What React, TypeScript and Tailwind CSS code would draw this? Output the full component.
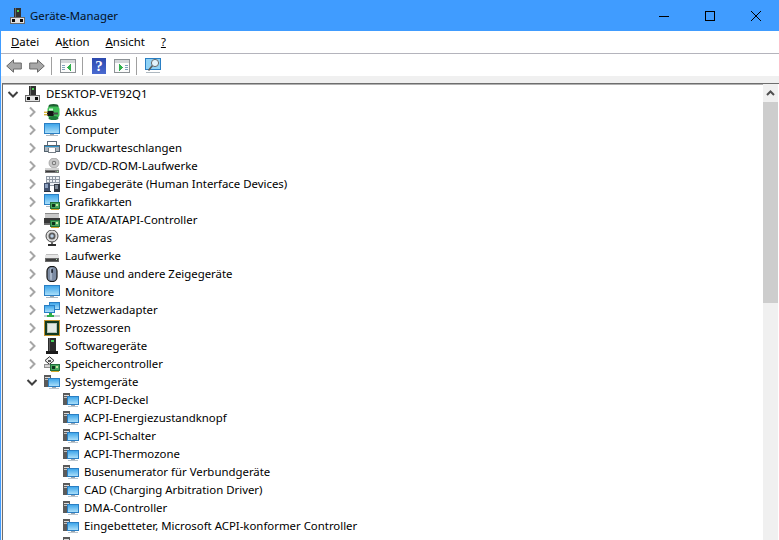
import React from 'react';

type IconProps = { className?: string };

const Svg = ({ children, className }: { children: React.ReactNode; className?: string }) => (
  <svg viewBox="0 0 16 16" width="16" height="16" className={`shrink-0 ${className ?? ''}`}>
    {children}
  </svg>
);

const Screen = ({ x, y, w, h }: { x: number; y: number; w: number; h: number }) => (
  <>
    <defs>
      <linearGradient id="screen" x1="0" y1="0" x2="0" y2="1">
        <stop offset="0" stopColor="#3fa6ea" />
        <stop offset="1" stopColor="#a9def9" />
      </linearGradient>
    </defs>
    <rect x={x} y={y} width={w} height={h} fill="#2a7fc4" shapeRendering="crispEdges" />
    <rect x={x + 1} y={y + 1} width={w - 2} height={h - 2} fill="url(#screen)" shapeRendering="crispEdges" />
  </>
);

const PcIcon = ({ className }: IconProps) => (
  <Svg className={className}>
    <g shapeRendering="crispEdges">
      <rect x="4" y="0" width="7" height="9" fill="#303030" />
      <rect x="5" y="0" width="1" height="9" fill="#6a6a6a" />
      <rect x="7" y="2" width="2" height="2" fill="#47d04f" />
      <rect x="0" y="9" width="15" height="7" fill="#6a6a6a" />
      <rect x="1" y="10" width="13" height="5" fill="#e2e2e2" />
      <rect x="2" y="11" width="3" height="3" fill="#0c0c0c" />
      <rect x="10" y="11" width="3" height="3" fill="#0c0c0c" />
    </g>
  </Svg>
);

const MonitorIcon = ({ className }: IconProps) => (
  <Svg className={className}>
    <Screen x={0} y={1} w={16} h={11} />
    <g shapeRendering="crispEdges">
      <rect x="6" y="12" width="4" height="1" fill="#9aa6b0" />
      <rect x="2" y="13" width="12" height="1" fill="#aeb8c0" />
    </g>
  </Svg>
);

const BatteryIcon = ({ className }: IconProps) => (
  <Svg className={className}>
    <ellipse cx="9.5" cy="2.5" rx="5" ry="2.4" fill="#1f5e32" />
    <rect x="3.5" y="2.5" width="12" height="11" rx="3" fill="#3fbf58" />
    <rect x="5" y="4.5" width="4" height="2" fill="#d4f7da" />
    <ellipse cx="9.5" cy="14" rx="5" ry="2" fill="#1f7a3a" />
    <rect x="3" y="7" width="7" height="5" rx="1.5" fill="#141414" />
    <rect x="0" y="7.6" width="3.5" height="1.4" fill="#d8b53a" />
    <rect x="0" y="10" width="3.5" height="1.4" fill="#d8b53a" />
    <rect x="9" y="8.5" width="5" height="2" fill="#4a4a4a" />
  </Svg>
);

const PrinterIcon = ({ className }: IconProps) => (
  <Svg className={className}>
    <g shapeRendering="crispEdges">
      <rect x="3" y="1" width="10" height="5" fill="#5d6b78" />
      <rect x="4" y="2" width="8" height="3" fill="#ffffff" />
      <rect x="0" y="5" width="16" height="7" fill="#55636f" />
      <rect x="1" y="6" width="14" height="1" fill="#2f93c8" />
      <rect x="1" y="7" width="14" height="4" fill="#a9b4bd" />
      <rect x="4" y="8" width="8" height="5" fill="#767f87" />
      <rect x="5" y="8" width="6" height="4" fill="#ffffff" />
    </g>
  </Svg>
);

const DvdIcon = ({ className }: IconProps) => (
  <Svg className={className}>
    <circle cx="10" cy="5" r="5" fill="#c8c8c8" stroke="#8a8a8a" strokeWidth="0.6" />
    <circle cx="10" cy="5" r="2.2" fill="#7d7d7d" />
    <circle cx="10" cy="5" r="1" fill="#ededed" />
    <g shapeRendering="crispEdges">
      <rect x="1" y="10" width="14" height="2" fill="#d4d4d4" />
      <rect x="1" y="12" width="14" height="3" fill="#757575" />
      <rect x="2" y="13" width="9" height="1" fill="#3b3b3b" />
      <rect x="13" y="13" width="1" height="1" fill="#9fe09f" />
    </g>
  </Svg>
);

const KeyboardIcon = ({ className }: IconProps) => (
  <Svg className={className}>
    <g shapeRendering="crispEdges">
      <rect x="2" y="0" width="14" height="10" fill="#8f98a3" />
      <path d="M3 1h2v2H3zM6 1h2v2H6zM9 1h2v2H9zM12 1h3v2h-3zM3 4h2v2H3zM6 4h2v2H6zM9 4h2v2H9zM12 4h3v2h-3zM3 7h12v2H3z" fill="#eef1f4" />
      <rect x="0" y="7" width="6" height="8" fill="#40506c" />
      <rect x="1" y="8" width="3" height="4" fill="#8ba0c0" />
      <rect x="0" y="15" width="7" height="1" fill="#2a2f38" />
      <rect x="10" y="8" width="6" height="8" fill="#30363f" />
      <rect x="11" y="9" width="3" height="4" fill="#7d8794" />
    </g>
  </Svg>
);

const CardOverlay = () => (
  <g shapeRendering="crispEdges">
    <rect x="6" y="8" width="10" height="7" fill="#23703c" />
    <rect x="7" y="9" width="8" height="5" fill="#49a860" />
    <rect x="8" y="10" width="3" height="3" fill="#10331c" />
    <rect x="12" y="10" width="2" height="2" fill="#c9e8a0" />
    <rect x="7" y="15" width="8" height="1" fill="#d2a92f" />
  </g>
);

const GpuIcon = ({ className }: IconProps) => (
  <Svg className={className}>
    <Screen x={0} y={0} w={15} h={11} />
    <rect x="2" y="12" width="4" height="1" fill="#aeb8c0" shapeRendering="crispEdges" />
    <CardOverlay />
  </Svg>
);

const IdeIcon = ({ className }: IconProps) => (
  <Svg className={className}>
    <g shapeRendering="crispEdges">
      <rect x="1" y="1" width="14" height="5" fill="#c9c9c9" />
      <rect x="1" y="1" width="14" height="1" fill="#8a8a8a" />
      <rect x="0" y="6" width="16" height="5" fill="#383838" />
      <rect x="0" y="11" width="7" height="2" fill="#6b6b6b" />
    </g>
    <CardOverlay />
  </Svg>
);

const CameraIcon = ({ className }: IconProps) => (
  <Svg className={className}>
    <circle cx="8" cy="6" r="6" fill="#dcdcdc" stroke="#4a4a4a" strokeWidth="1" />
    <circle cx="8" cy="6" r="3.5" fill="#5c5c5c" />
    <circle cx="8" cy="6" r="1.7" fill="#b9cfe6" />
    <g shapeRendering="crispEdges">
      <rect x="7" y="12" width="2" height="2" fill="#6d6d6d" />
      <rect x="4" y="14" width="8" height="2" fill="#2d2d2d" />
    </g>
  </Svg>
);

const DriveIcon = ({ className }: IconProps) => (
  <Svg className={className}>
    <g shapeRendering="crispEdges">
      <rect x="2" y="6" width="12" height="1" fill="#bdbdbd" />
      <rect x="1" y="7" width="14" height="3" fill="#e6e6e6" />
      <rect x="1" y="10" width="14" height="4" fill="#6a6a6a" />
      <rect x="2" y="11" width="12" height="2" fill="#3e3e3e" />
      <rect x="12" y="11" width="1" height="1" fill="#b5e0b5" />
    </g>
  </Svg>
);

const MouseIcon = ({ className }: IconProps) => (
  <Svg className={className}>
    <rect x="3" y="0.5" width="10" height="15" rx="4.5" fill="#7d8ca3" stroke="#161616" strokeWidth="1.2" />
    <rect x="6" y="2" width="2" height="12" rx="1" fill="#a9b6c8" />
    <rect x="7.2" y="3" width="1.8" height="4" rx="0.8" fill="#262c38" />
  </Svg>
);

const NetworkIcon = ({ className }: IconProps) => (
  <Svg className={className}>
    <Screen x={5} y={0} w={11} h={8} />
    <Screen x={0} y={3} w={11} h={8} />
    <g shapeRendering="crispEdges">
      <rect x="0" y="13" width="16" height="2" fill="#c9cfd3" />
      <rect x="5" y="11" width="3" height="2" fill="#2fae49" />
      <rect x="3" y="13" width="7" height="2" fill="#2fae49" />
    </g>
  </Svg>
);

const CpuIcon = ({ className }: IconProps) => (
  <Svg className={className}>
    <g shapeRendering="crispEdges">
      <rect x="0" y="0" width="16" height="16" fill="#c1922e" />
      <rect x="1" y="1" width="14" height="14" fill="#123a20" />
      <rect x="3" y="3" width="10" height="10" fill="#b7c2b9" />
      <rect x="4" y="4" width="8" height="8" fill="#e4eae5" />
    </g>
  </Svg>
);

const SoftwareIcon = ({ className }: IconProps) => (
  <Svg className={className}>
    <g shapeRendering="crispEdges">
      <rect x="4" y="0" width="8" height="13" fill="#2a2a2a" />
      <rect x="5" y="0" width="1" height="13" fill="#5a5a5a" />
      <rect x="7" y="2" width="3" height="2" fill="#46d05a" />
      <rect x="2" y="13" width="12" height="3" fill="#1a1a1a" />
    </g>
  </Svg>
);

const StorageIcon = ({ className }: IconProps) => (
  <Svg className={className}>
    <path d="M1 4.5L5.5 0.7 10 4.5 5.5 8.3z" fill="#ececec" stroke="#2e2e2e" strokeWidth="1" />
    <rect x="4" y="3.5" width="3" height="2" fill="#555" shapeRendering="crispEdges" />
    <rect x="0" y="8" width="7" height="4" fill="#8e8e8e" shapeRendering="crispEdges" />
    <rect x="1" y="9" width="5" height="2" fill="#d4d4d4" shapeRendering="crispEdges" />
    <CardOverlay />
  </Svg>
);

const SystemIcon = ({ className }: IconProps) => (
  <Svg className={className}>
    <g shapeRendering="crispEdges">
      <rect x="0" y="1" width="7" height="12" fill="#5a5a5a" />
      <rect x="1" y="3" width="5" height="1" fill="#dcdcdc" />
      <rect x="1" y="5" width="3" height="1" fill="#c0c0c0" />
    </g>
    <Screen x={4} y={4} w={12} h={9} />
    <g shapeRendering="crispEdges">
      <rect x="8" y="13" width="4" height="1" fill="#9aa6b0" />
      <rect x="5" y="14" width="10" height="1" fill="#bcc5cc" />
    </g>
  </Svg>
);

const RightChevron = () => (
  <svg width="14" height="14" viewBox="0 0 14 14"><path d="M5 2.5L9.5 7L5 11.5" fill="none" stroke="#a6a6a6" strokeWidth="2" /></svg>
);

const DownChevron = () => (
  <svg width="14" height="14" viewBox="0 0 14 14"><path d="M2.5 5L7 9.5L11.5 5" fill="none" stroke="#404040" strokeWidth="2" /></svg>
);

const Row = ({ level, label, icon, expanded }: { level: 0 | 1 | 2; label: string; icon: React.ReactNode; expanded?: boolean }) => (
  <div className={`flex h-[18px] items-center ${level === 0 ? 'pl-[3px]' : level === 1 ? 'pl-[22px]' : 'pl-[60px]'}`}>
    {level < 2 && (
      <span className="mr-[5px] flex w-[14px] justify-center">
        {expanded ? <DownChevron /> : <RightChevron />}
      </span>
    )}
    {icon}
    <span className="ml-[5px] whitespace-nowrap">{label}</span>
  </div>
);

const categories: [string, React.ComponentType<IconProps>][] = [
  ['Akkus', BatteryIcon],
  ['Computer', MonitorIcon],
  ['Druckwarteschlangen', PrinterIcon],
  ['DVD/CD-ROM-Laufwerke', DvdIcon],
  ['Eingabegeräte (Human Interface Devices)', KeyboardIcon],
  ['Grafikkarten', GpuIcon],
  ['IDE ATA/ATAPI-Controller', IdeIcon],
  ['Kameras', CameraIcon],
  ['Laufwerke', DriveIcon],
  ['Mäuse und andere Zeigegeräte', MouseIcon],
  ['Monitore', MonitorIcon],
  ['Netzwerkadapter', NetworkIcon],
  ['Prozessoren', CpuIcon],
  ['Softwaregeräte', SoftwareIcon],
  ['Speichercontroller', StorageIcon],
];

const systemDevices = [
  'ACPI-Deckel',
  'ACPI-Energiezustandknopf',
  'ACPI-Schalter',
  'ACPI-Thermozone',
  'Busenumerator für Verbundgeräte',
  'CAD (Charging Arbitration Driver)',
  'DMA-Controller',
  'Eingebetteter, Microsoft ACPI-konformer Controller',
  'Enumerator für virtuelle NDIS-Netzwerkadapter',
];

const Sep = () => <div className="h-[18px] w-px shrink-0 bg-[#a0a0a0]" />;

const WinIcon = ({ dir }: { dir: 'left' | 'right' }) => (
  <svg viewBox="0 0 16 14" width="16" height="14" shapeRendering="crispEdges" className="shrink-0">
    <rect x="0" y="0" width="16" height="14" fill="#8d9296" />
    <rect x="1" y="1" width="14" height="3" fill="#d2d5d8" />
    <rect x="1" y="4" width="14" height="9" fill="#fbfbfb" />
    {dir === 'left' ? (
      <>
        <rect x="2" y="6" width="3" height="1" fill="#7fa0bc" />
        <rect x="2" y="8" width="3" height="1" fill="#7fa0bc" />
        <rect x="2" y="10" width="3" height="1" fill="#7fa0bc" />
        <path d="M11 5v7L7 8.5z" fill="#2fb04c" />
      </>
    ) : (
      <>
        <path d="M5 5v7l4-3.5z" fill="#2fb04c" />
        <rect x="11" y="6" width="3" height="1" fill="#7fa0bc" />
        <rect x="11" y="8" width="3" height="1" fill="#7fa0bc" />
        <rect x="11" y="10" width="3" height="1" fill="#7fa0bc" />
      </>
    )}
  </svg>
);

const ArrowBtn = ({ flip }: { flip?: boolean }) => (
  <svg viewBox="0 0 16 14" width="16" height="14" className={`shrink-0 ${flip ? '-scale-x-100' : ''}`}>
    <path d="M0.7 7L7.5 0.8V4H15.3V10H7.5V13.2Z" fill="#a8a8a8" stroke="#6a6a6a" strokeWidth="1" />
  </svg>
);

export default function App() {
  return (
    <div className="flex h-[540px] w-[779px] flex-col overflow-hidden bg-white font-['Noto_Sans',sans-serif] text-[11.4px] text-black">
      <div className="flex h-[31px] shrink-0 items-center bg-[#409cff] pl-[10px]">
        <PcIcon />
        <span className="ml-[4px] text-[#06101c]">Geräte-Manager</span>
        <div className="ml-auto flex">
          <button className="flex h-[31px] w-[46px] items-center justify-center">
            <svg width="10" height="10" viewBox="0 0 10 10" shapeRendering="crispEdges"><rect x="0" y="5" width="10" height="1" fill="#000" /></svg>
          </button>
          <button className="flex h-[31px] w-[46px] items-center justify-center">
            <svg width="10" height="10" viewBox="0 0 10 10" shapeRendering="crispEdges"><rect x="0.5" y="0.5" width="9" height="9" fill="none" stroke="#000" /></svg>
          </button>
          <button className="flex h-[31px] w-[46px] items-center justify-center">
            <svg width="10" height="10" viewBox="0 0 10 10"><path d="M0 0L10 10M10 0L0 10" stroke="#000" strokeWidth="1" /></svg>
          </button>
        </div>
      </div>

      <div className="flex min-h-0 flex-1 flex-col border-l border-[#409cff]">
        <div className="flex h-[23px] shrink-0 items-center gap-[16px] border-b border-[#b4b4bc] pl-[10px]">
          <span><u>D</u>atei</span>
          <span>A<u>k</u>tion</span>
          <span><u>A</u>nsicht</span>
          <span><u>?</u></span>
        </div>

        <div className="flex h-[22px] shrink-0 items-center pl-[5px] pt-[2px]">
          <ArrowBtn />
          <span className="ml-[7px] flex"><ArrowBtn flip /></span>
          <span className="ml-[6px] flex"><Sep /></span>
          <span className="ml-[8px] flex"><WinIcon dir="left" /></span>
          <span className="ml-[6px] flex"><Sep /></span>
          <div className="ml-[9px] flex h-[16px] w-[14px] shrink-0 items-center justify-center bg-gradient-to-b from-[#2b48ae] to-[#4a6ad0] font-['Liberation_Serif',serif] text-[15px] font-bold text-white">?</div>
          <span className="ml-[8px] flex"><WinIcon dir="right" /></span>
          <span className="ml-[6px] flex"><Sep /></span>
          <svg className="ml-[8px] shrink-0" viewBox="0 0 16 16" width="16" height="16">
            <rect x="0.5" y="0.5" width="15" height="11" fill="#8fd2f6" stroke="#2a7fc4" />
            <circle cx="10" cy="5" r="3.6" fill="#e2f3fc" stroke="#6a6a6a" />
            <path d="M7.3 7.8L3.5 12.5" stroke="#5a5a5a" strokeWidth="1.6" />
            <rect x="1" y="14" width="14" height="1" fill="#aeb8c0" />
          </svg>
        </div>

        <div className="flex min-h-0 flex-1 flex-col bg-[#f0f0f0] pt-[7px] pl-px">
          <div className="flex min-h-0 flex-1 border-l border-t border-[#6e6e6e] bg-white">
            <div className="min-w-0 flex-1 overflow-hidden border-t border-[#b0b0b0] text-black">
              <Row level={0} label="DESKTOP-VET92Q1" icon={<PcIcon />} expanded />
              {categories.map(([label, Icon]) => (
                <Row key={label} level={1} label={label} icon={<Icon />} />
              ))}
              <Row level={1} label="Systemgeräte" icon={<SystemIcon />} expanded />
              {systemDevices.map((label) => (
                <Row key={label} level={2} label={label} icon={<SystemIcon />} />
              ))}
            </div>
            <div className="flex w-[15px] shrink-0 flex-col bg-[#f0f0f0]">
              <div className="flex h-[18px] items-center justify-center">
                <svg width="9" height="6" viewBox="0 0 9 6"><path d="M1 5L4.5 1.5L8 5" fill="none" stroke="#505050" strokeWidth="2" /></svg>
              </div>
              <div className="h-[201px] bg-[#cdcdcd]" />
            </div>
            <div className="w-px shrink-0 bg-white" />
          </div>
        </div>
      </div>
    </div>
  );
}
